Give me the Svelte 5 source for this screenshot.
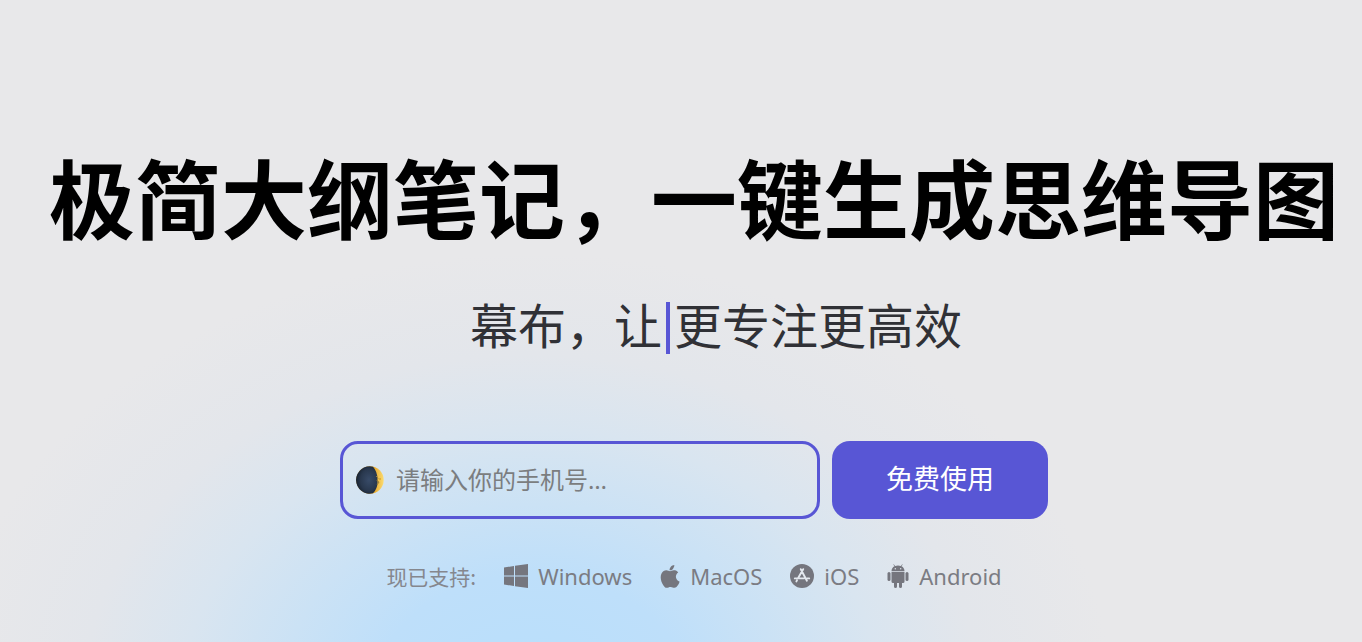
<script>
  let phone = $state('');
</script>

<main class="hero">
  <h1>极简大纲笔记，一键生成思维导图</h1>
  <p class="tagline">幕布，让<span class="caret"></span>更专注更高效</p>

  <form class="signup" onsubmit={(e) => e.preventDefault()}>
    <label class="field">
      <svg class="moon" viewBox="0 0 28 28" aria-hidden="true">
        <defs>
          <linearGradient id="lit" x1="0" x2="1">
            <stop offset="0.65" stop-color="#e8a82c" />
            <stop offset="1" stop-color="#fbdc72" />
          </linearGradient>
          <radialGradient id="dark" cx="0.6" cy="0.5" r="0.65">
            <stop offset="0" stop-color="#384b68" />
            <stop offset="0.6" stop-color="#29384e" />
            <stop offset="1" stop-color="#131c28" />
          </radialGradient>
        </defs>
        <circle cx="14" cy="14" r="13.7" fill="url(#lit)" />
        <path d="M17 .7A13.7 13.7 0 1 0 17 27.3Q22 22 21.6 14 21.5 5.500 17 .7Z" fill="url(#dark)" />
        <path d="M20 10l2 2-1 3 2 1-2 3" fill="none" stroke="#9b803a" stroke-width="1" />
        <circle cx="24" cy="13" r="1" fill="#d9a72d" />
      </svg>
      <input type="tel" placeholder="请输入你的手机号…" aria-label="手机号" bind:value={phone} />
    </label>
    <button type="submit">免费使用</button>
  </form>

  <div class="platforms">
    <span class="label">现已支持:</span>
    <span class="platform">
      <svg class="windows" viewBox="0 0 24 24" aria-hidden="true">
        <path d="M0 3.500 10 2v9.500H0zM11 1.800 24 0v11.500H11zM0 12.500h10V22L0 20.500zM11 12.500h13V24L11 22.200z" />
      </svg>
      Windows
    </span>
    <span class="platform">
      <svg class="apple" viewBox="0 0 20 24" aria-hidden="true">
        <path d="M16.500 12.700c0-2.400 2-3.600 2.100-3.700-1.200-1.700-3-1.900-3.600-1.900-1.500-.2-3 .9-3.700.9-.8 0-2-.9-3.300-.9C6.300 7.200 4.700 8.100 3.800 9.600c-1.800 3.200-.5 7.900 1.300 10.500.9 1.300 1.900 2.700 3.300 2.600 1.300-.1 1.800-.8 3.400-.8s2 .8 3.400.8 2.300-1.300 3.200-2.500c1-1.500 1.400-2.900 1.400-3-.1 0-3.300-1.200-3.300-4.500zM14 5.600c.7-.9 1.200-2.100 1.100-3.300-1.100 0-2.400.7-3.100 1.600-.7.800-1.300 2-1.100 3.200 1.200.1 2.400-.6 3.100-1.500z" transform="translate(-2.600 -1.600) scale(1.120)" />
      </svg>
      MacOS
    </span>
    <span class="platform">
      <svg class="store" viewBox="0 0 24 24" aria-hidden="true">
        <circle cx="12" cy="12" r="12" />
        <path d="M10.800 5.200 16.900 16.700M13.200 5.200 8.300 13.800M4.800 14.400h9M17 14.400h2.200M7 16.300l-.6 1.100" fill="none" stroke="#e3e8ee" stroke-width="1.900" stroke-linecap="round" />
      </svg>
      iOS
    </span>
    <span class="platform">
      <svg class="android" viewBox="0 0 22 24" aria-hidden="true">
        <path d="M4.500 8h13v9.500q0 1.500-1.500 1.500h-1v3.500a1.500 1.500 0 0 1-3 0V19h-2v3.500a1.500 1.500 0 0 1-3 0V19H6q-1.500 0-1.500-1.500z" />
        <path d="M4.500 7.200q.1-3.400 3-4.900L6.300.5l.5-.3 1.300 1.900q2.900-1 5.800 0L15.200.2l.5.3-1.200 1.800q2.900 1.500 3 4.900zM8.300 4.100a.7.700 0 1 0 0 1.400.7.700 0 1 0 0-1.400m5.400 0a.7.700 0 1 0 0 1.400.7.700 0 1 0 0-1.400" fill-rule="evenodd" />
        <rect x="0.500" y="8" width="3" height="9" rx="1.500" />
        <rect x="18.500" y="8" width="3" height="9" rx="1.500" />
      </svg>
      Android
    </span>
  </div>
</main>

<style>
  :global(body) {
    margin: 0;
    background: #e8e8ea;
  }

  .hero {
    box-sizing: border-box;
    min-height: 100vh;
    padding: 134px 0 48px 26px;
    display: flex;
    flex-direction: column;
    align-items: center;
    overflow: hidden;
    font-family: "Noto Sans", "Noto Sans CJK SC", sans-serif;
    background: radial-gradient(
      ellipse 580px 440px at 39% 108%,
      #b8dffc 0%,
      #bedffa 27%,
      #cbe2f5 43%,
      #d9e5f0 60%,
      #e3e6eb 77%,
      #e8e8ea 100%
    );
  }

  h1 {
    margin: 0;
    font: 700 86px/124px "Noto Sans CJK SC", sans-serif;
    color: #000;
    white-space: nowrap;
  }

  .tagline {
    display: flex;
    align-items: center;
    margin: 29px 0 0;
    padding-left: 44px;
    font: 400 48px/72px "Noto Sans CJK SC", sans-serif;
    color: #303136;
    white-space: nowrap;
  }

  .caret {
    width: 4px;
    height: 52px;
    margin: 10px 4px 0;
    background: #5856d5;
  }

  .signup {
    display: flex;
    gap: 12px;
    margin-top: 82px;
  }

  .field {
    box-sizing: border-box;
    display: flex;
    align-items: center;
    gap: 12px;
    width: 480px;
    height: 78px;
    padding: 0 13px;
    border: 3px solid #5856d5;
    border-radius: 18px;
  }

  .moon {
    flex: none;
    width: 28px;
    height: 28px;
  }

  input {
    flex: 1;
    min-width: 0;
    padding: 0;
    border: 0;
    outline: 0;
    background: none;
    font: 400 24px/36px "Noto Sans", "Noto Sans CJK SC", sans-serif;
    color: #303136;
  }

  input::placeholder {
    color: #7b7d80;
    opacity: 1;
  }

  button {
    width: 216px;
    height: 78px;
    padding: 0 0 4px;
    border: 0;
    border-radius: 18px;
    background: #5856d5;
    color: #fff;
    font: 400 27px/40px "Noto Sans CJK SC", sans-serif;
    cursor: pointer;
  }

  .platforms {
    display: flex;
    align-items: center;
    gap: 28px;
    margin-top: 41px;
    font-size: 22px;
    line-height: 32px;
    color: #7b7c83;
    white-space: nowrap;
  }

  .label {
    font: 400 21px/32px "Noto Sans CJK SC", sans-serif;
    color: #85878e;
  }

  .platform {
    display: flex;
    align-items: center;
    gap: 10px;
  }

  .platform svg {
    height: 24px;
    fill: #75767e;
  }

  .windows,
  .store {
    width: 24px;
  }

  .apple {
    width: 20px;
  }

  .android {
    width: 22px;
  }
</style>
